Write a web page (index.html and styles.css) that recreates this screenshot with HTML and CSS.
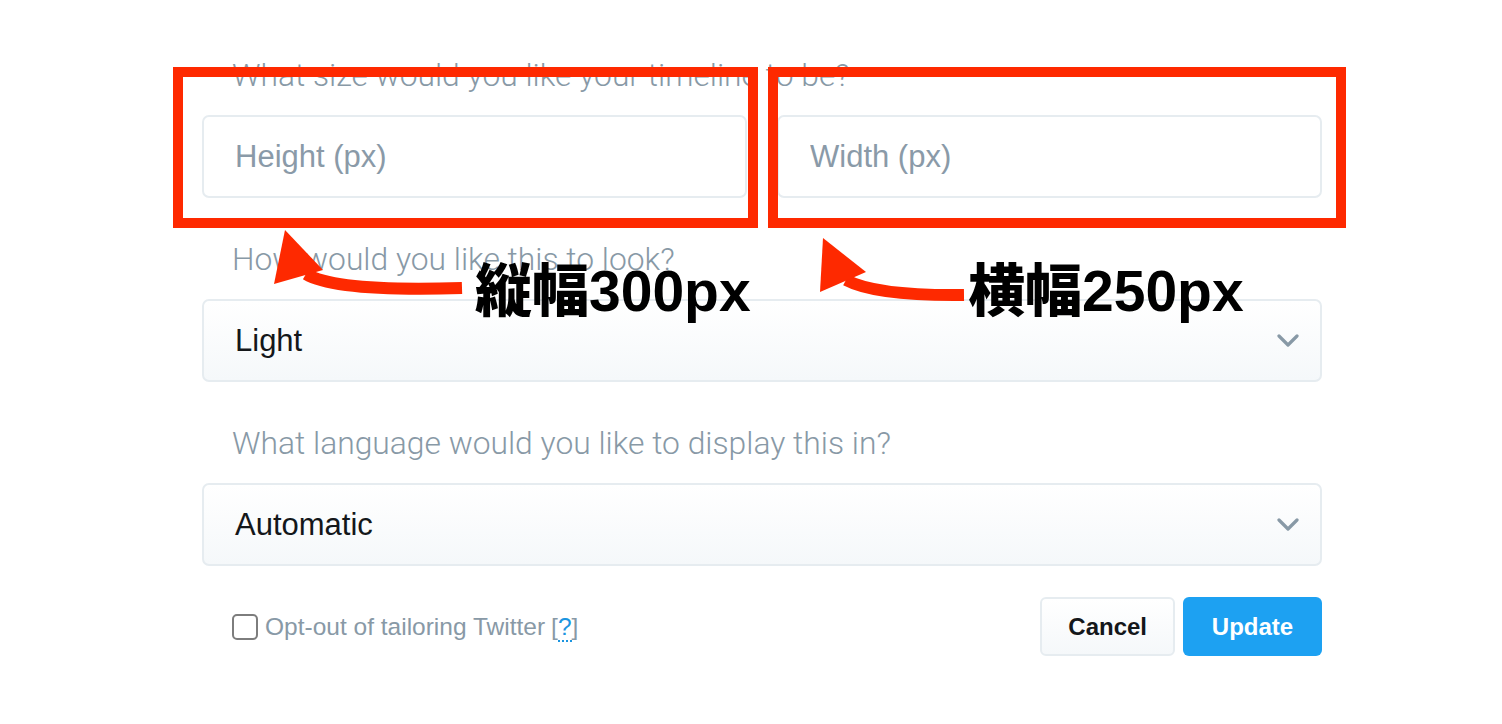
FILE: index.html
```html
<!DOCTYPE html>
<html>
<head>
<title>Embed Options</title>
<meta charset="UTF-8">
<meta name="viewport" content="width=device-width, initial-scale=1.0">
<link rel="stylesheet" href="styles.css">
</head>
<body>
<div class="page">
<form class="options">
<div class="group">
<label class="question">What size would you like your timeline to be?</label>
<div class="size-row">
<input class="field" type="text" placeholder="Height (px)">
<input class="field" type="text" placeholder="Width (px)">
</div>
</div>
<div class="group">
<label class="question">How would you like this to look?</label>
<div class="select">
<span>Light</span>
<svg class="chevron" width="22" height="14" viewBox="0 0 22 14"><path d="M2 2 L11 11 L20 2" fill="none" stroke="#8899a6" stroke-width="3.2" stroke-linecap="round" stroke-linejoin="round"/></svg>
</div>
</div>
<div class="group">
<label class="question">What language would you like to display this in?</label>
<div class="select">
<span>Automatic</span>
<svg class="chevron" width="22" height="14" viewBox="0 0 22 14"><path d="M2 2 L11 11 L20 2" fill="none" stroke="#8899a6" stroke-width="3.2" stroke-linecap="round" stroke-linejoin="round"/></svg>
</div>
</div>
<div class="footer">
<label class="optout"><span class="check"></span>Opt-out of tailoring Twitter <span class="help">[<abbr>?</abbr>]</span></label>
<div class="actions">
<button type="button" class="btn btn-cancel">Cancel</button>
<button type="button" class="btn btn-update">Update</button>
</div>
</div>
</form>

<!-- annotations drawn over the screenshot -->
<div class="mark mark-height"></div>
<div class="mark mark-width"></div>
<div class="note note-height">縦幅300px</div>
<div class="note note-width">横幅250px</div>
<svg class="arrows" width="1502" height="724" viewBox="0 0 1502 724">
<path d="M306 274 Q 336 292 462 288" fill="none" stroke="#fe2900" stroke-width="12"/>
<polygon points="285,230 274,284 323,270" fill="#fe2900"/>
<path d="M846 280 Q 876 296 964 295" fill="none" stroke="#fe2900" stroke-width="12"/>
<polygon points="823,238 820,292 866,272" fill="#fe2900"/>
</svg>
</div>
</body>
</html>
```

FILE: styles.css
```css
body {
    margin: 0;
    background: #fff;
    font-family: "Liberation Sans", Arial, sans-serif;
}
.page {
    position: relative;
    width: 1502px;
    height: 724px;
    overflow: hidden;
}
.options {
    width: 1120px;
    margin-left: 202px;
    padding-top: 55px;
}
.group {
    margin-bottom: 41px;
}
.question {
    display: block;
    padding-left: 30px;
    margin-bottom: 20px;
    line-height: 40px;
    font-family: Roboto, "Liberation Sans", sans-serif;
    font-weight: 300;
    font-size: 31.8px;
    color: #8899a6;
}
.size-row {
    display: flex;
    gap: 30px;
}
.field {
    flex: 1;
    min-width: 0;
    box-sizing: border-box;
    height: 83px;
    padding: 0 31px;
    border: 2px solid #e6ecf0;
    border-radius: 7px;
    font-family: "Liberation Sans", Arial, sans-serif;
    font-size: 31px;
    color: #14171a;
    outline: none;
}
.field::placeholder {
    color: #8a9aa8;
}
.select {
    display: flex;
    align-items: center;
    justify-content: space-between;
    box-sizing: border-box;
    height: 83px;
    padding: 0 21px 0 31px;
    border: 2px solid #e6ecf0;
    border-radius: 7px;
    background: linear-gradient(#fff, #f5f8fa);
    font-size: 31px;
    color: #14171a;
}
.footer {
    display: flex;
    align-items: center;
    justify-content: space-between;
    margin-top: -10px;
}
.optout {
    display: flex;
    align-items: center;
    padding-left: 30px;
    font-size: 24.5px;
    color: #8899a6;
}
.check {
    width: 22px;
    height: 22px;
    margin-right: 7px;
    border: 2px solid #7d7d7d;
    border-radius: 5px;
    background: #fff;
}
.help {
    margin-left: 6px;
}
.help abbr {
    color: #1b95e0;
    text-decoration: none;
    border-bottom: 2px dotted #1b95e0;
}
.actions {
    display: flex;
    gap: 8px;
}
.btn {
    height: 59px;
    padding: 0 26px;
    border-radius: 6px;
    font-family: "Liberation Sans", Arial, sans-serif;
    font-weight: bold;
    font-size: 24px;
    cursor: pointer;
}
.btn-cancel {
    border: 2px solid #e6ecf0;
    background: linear-gradient(#fff, #f5f8fa);
    color: #14171a;
}
.btn-update {
    min-width: 139px;
    border: none;
    background: #1da1f2;
    color: #fff;
}
.mark {
    position: absolute;
    top: 67px;
    height: 141px;
    border: 10px solid #fe2900;
}
.mark-height {
    left: 173px;
    width: 565px;
}
.mark-width {
    left: 768px;
    width: 558px;
}
.note {
    position: absolute;
    top: 251px;
    font-family: "Liberation Sans", "Noto Sans CJK JP", sans-serif;
    font-weight: 900;
    font-size: 57px;
    line-height: 80px;
    color: #000;
}
.note-height {
    left: 475px;
}
.note-width {
    left: 968px;
}
.arrows {
    position: absolute;
    left: 0;
    top: 0;
    pointer-events: none;
}
```
